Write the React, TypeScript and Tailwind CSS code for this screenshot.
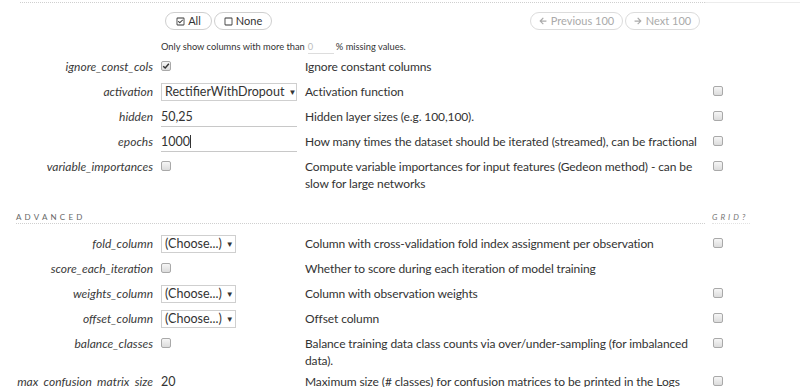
import React from 'react';
import { FaRegCheckSquare, FaRegSquare, FaArrowLeft, FaArrowRight } from 'react-icons/fa';

// ==========================================================================
// Small form bits
// ==========================================================================

function Box({ checked = false }: { checked?: boolean }) {
  return (
    <span className="mt-[3.5px] flex h-[10px] w-[10px] items-center justify-center rounded-[2px] border border-[#a9a9a9] bg-gradient-to-b from-[#f6f6f6] to-[#dcdcdc]">
      {checked && (
        <svg viewBox="0 0 10 10" className="h-[8px] w-[8px]">
          <path d="M1.5 5.2 L4 7.5 L8.6 2.2" fill="none" stroke="#333" strokeWidth="1.8" />
        </svg>
      )}
    </span>
  );
}

function Select({ value, width }: { value: string; width: string }) {
  return (
    <div className={`flex h-[18px] items-center border border-[#cfcfcf] bg-white px-[3px] text-[12.5px] leading-[16px] text-[#333] ${width}`}>
      <span className="whitespace-nowrap">{value}</span>
      <span className="ml-auto pl-[4px] text-[8px]">▼</span>
    </div>
  );
}

function TextInput({ value, cursor = false }: { value: string; cursor?: boolean }) {
  return (
    <div className="flex h-[19px] w-[136px] items-start border-b border-[#c8c8c8] text-[12.5px] leading-[17px] text-[#333]">
      <span>{value}</span>
      {cursor && <span className="mt-[2px] h-[13px] w-px bg-[#333]" />}
    </div>
  );
}

type RowProps = {
  label: string;
  input?: React.ReactNode;
  desc: React.ReactNode;
  grid?: boolean;
};

function Row({ label, input, desc, grid = true }: RowProps) {
  return (
    <div className="flex min-h-[25px] items-start pt-[4px]">
      <div className="w-[153px] shrink-0 whitespace-nowrap text-right text-[12px] italic leading-[17px] text-[#3a3a3a]">{label}</div>
      <div className="ml-[8px] flex w-[136px] shrink-0">{input}</div>
      <div className="ml-[8px] w-[400px] shrink-0 whitespace-nowrap text-[12px] leading-[17px] tracking-[-0.1px] text-[#333]">{desc}</div>
      <div className="ml-[8px] w-[10px] shrink-0">{grid && <Box />}</div>
    </div>
  );
}

// ==========================================================================
// Page
// ==========================================================================

export default function App() {
  return (
    <div className="h-[387px] w-[800px] overflow-hidden bg-white font-['Lato','Liberation_Sans',sans-serif]">
      {/* top rule */}
      <div className="flex h-[3px]">
        <div className="ml-[20px] w-[685px] border-b border-dotted border-[#cfcfcf]" />
        <div className="flex-1 border-b border-[#ececec]" />
      </div>

      {/* paging buttons */}
      <div className="mt-[9px] flex h-[18px]">
        <div className="ml-[165px] flex gap-[2px]">
          <button className="flex h-[18px] w-[47px] items-center justify-center gap-[3px] rounded-full border border-[#cfcfcf] text-[11px] text-[#333]">
            <FaRegCheckSquare className="h-[9px] w-[9px]" />
            All
          </button>
          <button className="flex h-[18px] w-[58px] items-center justify-center gap-[3px] rounded-full border border-[#cfcfcf] text-[11px] text-[#333]">
            <FaRegSquare className="h-[9px] w-[9px]" />
            None
          </button>
        </div>
        <div className="ml-auto mr-[100px] flex gap-[2px]">
          <button className="flex h-[18px] w-[93px] items-center justify-center gap-[4px] rounded-full border border-[#dcdcdc] text-[11px] text-[#aaa]">
            <FaArrowLeft className="h-[8px] w-[8px]" />
            Previous 100
          </button>
          <button className="flex h-[18px] w-[75px] items-center justify-center gap-[4px] rounded-full border border-[#dcdcdc] text-[11px] text-[#aaa]">
            <FaArrowRight className="h-[8px] w-[8px]" />
            Next 100
          </button>
        </div>
      </div>

      {/* missing values filter */}
      <div className="ml-[161px] mt-[11px] flex h-[12px] items-center text-[9.3px] leading-[12px] text-[#333]">
        <span>Only show columns with more than</span>
        <span className="ml-[3px] w-[26px] border-b border-[#ddd] text-[#bbb]">0</span>
        <span className="ml-[2px]">% missing values.</span>
      </div>

      <div className="mt-[0.5px]">
        <Row label="ignore_const_cols" input={<Box checked />} desc="Ignore constant columns" grid={false} />
        <Row label="activation" input={<Select value="RectifierWithDropout" width="w-[136px]" />} desc="Activation function" />
        <Row label="hidden" input={<TextInput value="50,25" />} desc="Hidden layer sizes (e.g. 100,100)." />
        <Row
          label="epochs"
          input={<TextInput value="1000" cursor />}
          desc="How many times the dataset should be iterated (streamed), can be fractional"
        />
        <Row
          label="variable_importances"
          input={<Box />}
          desc={
            <>
              Compute variable importances for input features (Gedeon method) - can be
              <br />
              slow for large networks
            </>
          }
        />
      </div>

      {/* advanced header */}
      <div className="mt-[20px] flex">
        <div className="ml-[16px] w-[689px] border-b border-dotted border-[#cfcfcf] pb-[1px] text-[8px] leading-[10px] tracking-[3.2px] text-[#666]">
          ADVANCED
        </div>
        <div className="ml-[7px] w-[38px] border-b border-dotted border-[#e2e2e2] pb-[1px] text-[8px] italic leading-[10px] tracking-[3px] text-[#777]">
          GRID?
        </div>
      </div>

      <div className="mt-[7px]">
        <Row
          label="fold_column"
          input={<Select value="(Choose...)" width="w-[75px]" />}
          desc="Column with cross-validation fold index assignment per observation"
        />
        <Row label="score_each_iteration" input={<Box />} desc="Whether to score during each iteration of model training" grid={false} />
        <Row label="weights_column" input={<Select value="(Choose...)" width="w-[75px]" />} desc="Column with observation weights" />
        <Row label="offset_column" input={<Select value="(Choose...)" width="w-[75px]" />} desc="Offset column" />
        <Row
          label="balance_classes"
          input={<Box />}
          desc={
            <>
              Balance training data class counts via over/under-sampling (for imbalanced
              <br />
              data).
            </>
          }
        />
        <Row
          label="max_confusion_matrix_size"
          input={<TextInput value="20" />}
          desc="Maximum size (# classes) for confusion matrices to be printed in the Logs"
        />
      </div>
    </div>
  );
}
